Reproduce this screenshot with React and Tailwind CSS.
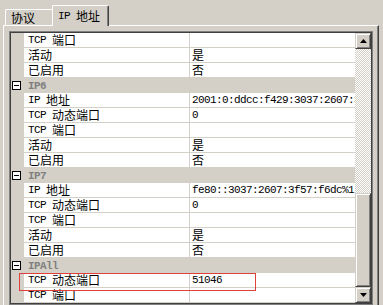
import React from 'react';

const rows = [
  { n: 'TCP 端口', v: '' },
  { n: '活动', v: '是' },
  { n: '已启用', v: '否' },
  { h: 'IP6' },
  { n: 'IP 地址', v: '2001:0:ddcc:f429:3037:2607:3f57:f6dc' },
  { n: 'TCP 动态端口', v: '0' },
  { n: 'TCP 端口', v: '' },
  { n: '活动', v: '是' },
  { n: '已启用', v: '否' },
  { h: 'IP7' },
  { n: 'IP 地址', v: 'fe80::3037:2607:3f57:f6dc%1' },
  { n: 'TCP 动态端口', v: '0' },
  { n: 'TCP 端口', v: '' },
  { n: '活动', v: '是' },
  { n: '已启用', v: '否' },
  { h: 'IPAll' },
  { n: 'TCP 动态端口', v: '51046' },
  { n: 'TCP 端口', v: '' },
];

const cjk = /[\u3000-\u9fff]/;

// latin runs in mono (6px advance), CJK runs at 12px; each run boxed to 14px so lines don't grow
const Txt = ({ s }) => (
  <span className="whitespace-pre">
    {s.split(/([\u3000-\u9fff]+)/).filter(Boolean).map((p, i) =>
      cjk.test(p) ? (
        <span key={i} className="inline-block align-top h-[14px] leading-[14px] text-[12px] tracking-normal font-['Noto_Sans_CJK_SC',sans-serif]">{p}</span>
      ) : (
        <span key={i} className="inline-block align-top h-[14px] leading-[14px]">{p}</span>
      )
    )}
  </span>
);

const Arrow = ({ down }) => (
  <svg width="7" height="4" viewBox="0 0 7 4">
    <polygon points={down ? '0,0 7,0 3.5,4' : '0,4 7,4 3.5,0'} fill="#000" />
  </svg>
);

const RaisedBox = ({ className, children }) => (
  <div className={`flex items-center justify-center bg-[#d4d0c8] border border-t-[#d4d0c8] border-l-[#d4d0c8] border-r-[#404040] border-b-[#404040] shadow-[inset_1px_1px_#fff,inset_-1px_-1px_#808080] ${className}`}>
    {children}
  </div>
);

const Row = ({ row }) => {
  if (row.h) {
    return (
      <div className="flex h-[15px] bg-[#d4d0c8] items-center">
        <div className="w-[13px] h-full flex items-center">
          <div className="ml-[1px] w-[9px] h-[9px] border border-black bg-white flex items-center justify-center">
            <div className="w-[5px] h-[1px] bg-black" />
          </div>
        </div>
        <div className="pl-[4px] h-[14px] font-bold text-[#808080] leading-[14px]">{row.h}</div>
      </div>
    );
  }
  return (
    <div className="flex h-[15px]">
      <div className="w-[13px] bg-[#d4d0c8]" />
      <div className="w-[166px] bg-white border-b border-r border-[#d4d0c8] pl-[4px] leading-[14px] whitespace-nowrap overflow-hidden">
        <Txt s={row.n} />
      </div>
      <div className="flex-1 bg-white border-b border-[#d4d0c8] pl-[2px] leading-[14px] whitespace-nowrap overflow-hidden">
        <Txt s={row.v} />
      </div>
    </div>
  );
};

export default function App() {
  return (
    <div className="relative w-[383px] h-[305px] bg-[#d4d0c8] overflow-hidden text-black text-[11px] tracking-[-0.6px] font-['Liberation_Mono','Noto_Sans_CJK_SC',monospace]">
      {/* tabs */}
      <div className="flex items-end h-[25px] pl-[5px]">
        <div className="w-[47px] h-[16px] border-l border-t border-white rounded-tl-[2px] pl-[5px] pt-[1px]">
          <Txt s="协议" />
        </div>
        <div className="relative z-10 w-[57px] h-[21px] mb-[-1px] bg-[#d4d0c8] border-l border-t border-white border-r border-r-[#404040] shadow-[inset_-1px_0_#808080] rounded-tl-[2px] rounded-tr-[2px] pl-[5px] pt-[3px]">
          <Txt s="IP 地址" />
        </div>
      </div>

      {/* panel */}
      <div className="ml-[3px] w-[376px] h-[290px] border-l border-t border-white border-r border-r-[#404040] shadow-[inset_-1px_0_#808080] pl-[5px] pt-[5px]">
        <div className="w-[364px] border border-[#808080]">
          <div className="flex border border-[#404040]">
            <div className="w-[344px]">
              {rows.map((r, i) => (
                <Row key={i} row={r} />
              ))}
            </div>
            <div className="w-[16px] flex flex-col">
              <RaisedBox className="h-[16px]">
                <Arrow />
              </RaisedBox>
              <div className="h-[144px] bg-[repeating-conic-gradient(#d4d0c8_0_25%,#ffffff_0_50%)] bg-[length:2px_2px]" />
              <RaisedBox className="h-[94px]" />
              <RaisedBox className="h-[16px]">
                <Arrow down />
              </RaisedBox>
            </div>
          </div>
        </div>
      </div>

      {/* highlight annotation */}
      <div className="absolute left-[19px] top-[273px] w-[237px] h-[18px] border border-[#e0403c]" />
    </div>
  );
}
